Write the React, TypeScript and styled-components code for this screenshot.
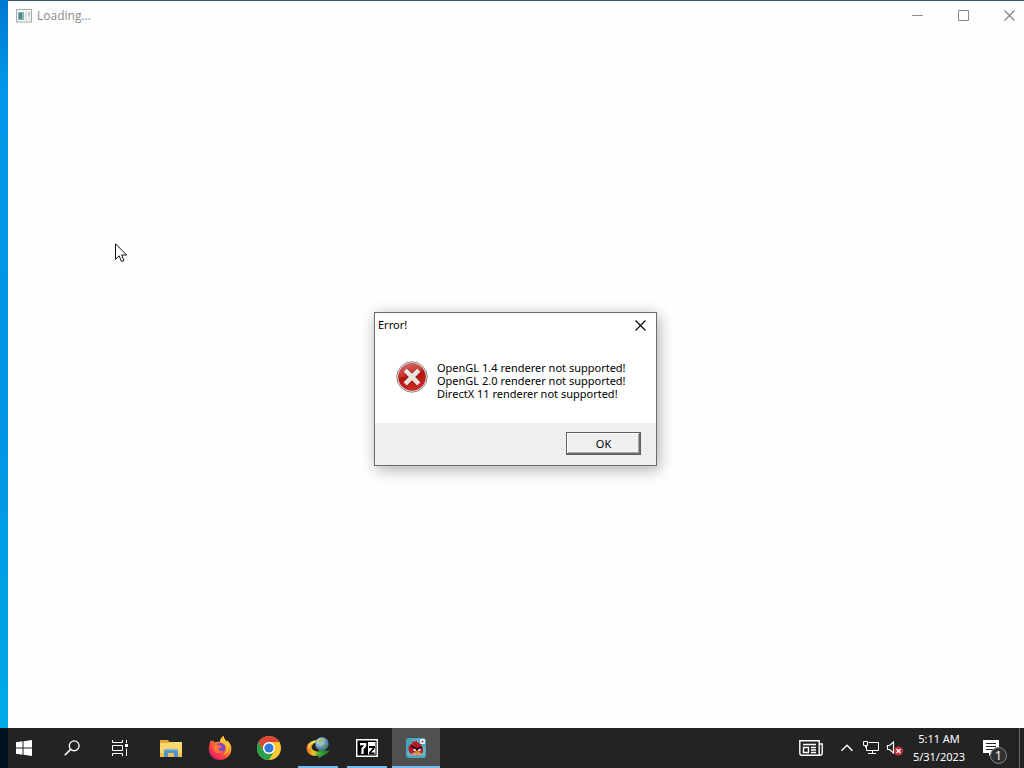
import React from 'react';
import styled, { createGlobalStyle } from 'styled-components';

const GlobalStyle = createGlobalStyle`
  *, *::before, *::after { box-sizing: border-box; }
  body { margin: 0; font-family: "Noto Sans", "Open Sans", sans-serif; }
  button { font: inherit; color: inherit; margin: 0; padding: 0; border: 0; background: none; }
  svg { display: block; flex: none; }
`;

const Screen = styled.div`
  position: relative;
  display: flex;
  flex-direction: column;
  min-height: 100vh;
  overflow: hidden;
`;

const Desktop = styled.div`
  flex: 1;
  display: flex;
  padding-left: 8px;
  background: linear-gradient(#0078d0, #0098ea 12%, #0096e4 60%, #00aae6);
`;

const AppWindow = styled.main`
  flex: 1;
  border-top: 1px solid #3f5870;
  background: #fefefe;
`;

const TitleBar = styled.header`
  display: flex;
  align-items: center;
  height: 29px;
  padding-left: 8px;
  gap: 5px;
  color: #8c8c8c;
`;

const WindowTitle = styled.h1`
  flex: 1;
  margin: 0;
  font-family: "Open Sans", "Noto Sans", sans-serif;
  font-size: 12px;
  line-height: 16px;
  font-weight: 400;
`;

const CaptionButtons = styled.div`
  display: flex;
  margin-right: -8px;
`;

const CaptionButton = styled.button`
  display: grid;
  place-items: center;
  width: 46px;
  height: 29px;
`;

const ModalLayer = styled.div`
  position: absolute;
  inset: 10px 0 0 7px;
  display: grid;
  place-items: center;
`;

const Dialog = styled.section`
  width: 283px;
  border: 1px solid #6b6b6b;
  background: #fff;
  color: #000;
  font-size: 11px;
  line-height: 13px;
  box-shadow: 0 0 14px rgba(0, 0, 0, 0.12), 3px 5px 14px rgba(0, 0, 0, 0.22);
`;

const DialogHeader = styled.header`
  display: flex;
  align-items: center;
  justify-content: space-between;
  height: 24px;
  padding: 0 4px 0 3px;
`;

const DialogTitle = styled.h2`
  margin: 0;
  font-size: 11px;
  line-height: 16px;
  font-weight: 400;
`;

const DialogClose = styled.button`
  display: grid;
  place-items: center;
  width: 23px;
  height: 23px;
`;

const DialogBody = styled.div`
  display: flex;
  gap: 9px;
  height: 86px;
  padding: 24px 21px 0;
`;

const Message = styled.p`
  margin: 0;
  white-space: pre-line;
`;

const DialogFooter = styled.footer`
  display: flex;
  justify-content: flex-end;
  height: 42px;
  padding: 9px 15px 0 0;
  background: #efefef;
`;

const OkButton = styled.button`
  width: 75px;
  height: 23px;
  border: 1px solid #606060;
  background: #f0f0f0;
  line-height: 20px;
  box-shadow: inset -1px -1px #696969, inset 1px 1px #fff, inset -2px -2px #a8a8a8;
`;

const Taskbar = styled.nav`
  display: flex;
  height: 40px;
  background: linear-gradient(90deg, #00131f 8px, #232323 8px);
  color: #fff;
`;

const AppButtons = styled.div`
  display: flex;
  gap: 1px;
  margin-left: 3px;
`;

const TaskButton = styled.button<{ $state?: 'open' | 'active' }>`
  display: grid;
  place-items: center;
  width: 48px;
  height: 40px;
  background: ${({ $state }) => ($state === 'active' ? '#505050' : 'transparent')};
  background-image: ${({ $state }) => ($state ? 'linear-gradient(#76b9ed, #76b9ed)' : 'none')};
  background-repeat: no-repeat;
  background-position: center bottom;
  background-size: ${({ $state }) => ($state === 'active' ? '48px 2px' : '40px 2px')};
`;

const Tray = styled.div`
  display: flex;
  margin-left: auto;
`;

const TrayButton = styled.button<{ $wide?: boolean }>`
  display: grid;
  place-items: center;
  width: ${({ $wide }) => ($wide ? '48px' : '24px')};
  height: 40px;
`;

const Clock = styled.button`
  display: flex;
  flex-direction: column;
  align-items: center;
  justify-content: center;
  width: 64px;
  padding-bottom: 1px;
  font-size: 11px;
  line-height: 18px;
  white-space: nowrap;
`;

const ShowDesktop = styled.button`
  width: 5px;
  border-left: 1px solid #686868;
`;

const Pointer = styled.svg`
  position: absolute;
  left: 115px;
  top: 243px;
`;

const Cross = ({ size, color }: { size: number; color: string }) => (
  <svg width={size} height={size} viewBox="0 0 11 11" stroke={color} fill="none">
    <path d="M.5.5l10 10M10.500.5l-10 10" strokeWidth="1.100" />
  </svg>
);

const WindowIcon = () => (
  <svg width="16" height="14" viewBox="0 0 16 14">
    <rect x=".5" y=".5" width="15" height="12.500" fill="#f3f5f5" stroke="#a5adaf" />
    <rect x="2" y="3" width="6" height="8" fill="#8fb5ae" />
    <rect x="3" y="4" width="3" height="6" fill="#4f8782" />
    <rect x="9" y="3" width="2" height="8" fill="#dfe2e2" />
    <path d="M12 3h2v4h-2z" fill="#c3caca" />
    <path d="M13 7h1v4h-1z" fill="#d3d7d7" />
  </svg>
);

const ErrorIcon = () => (
  <svg width="32" height="32" viewBox="0 0 33 33">
    <defs>
      <linearGradient id="err" x1="0" y1="0" x2=".3" y2="1">
        <stop offset="0" stopColor="#dc7871" />
        <stop offset=".45" stopColor="#c83532" />
        <stop offset=".55" stopColor="#b3110f" />
        <stop offset="1" stopColor="#cc2925" />
      </linearGradient>
    </defs>
    <circle cx="16.500" cy="16.500" r="15.700" fill="#ede7e5" stroke="#8c8583" />
    <circle cx="16.500" cy="16.500" r="14" fill="url(#err)" stroke="#a42a27" strokeWidth=".6" />
    <path d="M9.500 9.500l14 14M23.500 9.500l-14 14" stroke="#8d1a17" strokeWidth="6" />
    <path d="M9.500 9.500l14 14M23.500 9.500l-14 14" stroke="#ece4de" strokeWidth="4.800" />
  </svg>
);

const StartIcon = () => (
  <svg width="16" height="16" viewBox="0 0 16 16" fill="#fff">
    <path d="M0 2.200L6.500 1.300v6.200H0zM7.500 1.200L16 0v7.500H7.500zM0 8.500h6.500v6.200L0 13.800zM7.500 8.500H16V16l-8.500-1.200z" />
  </svg>
);

const SearchIcon = () => (
  <svg width="16" height="16" viewBox="0 0 17 17" fill="none" stroke="#fff" strokeWidth="1.400">
    <circle cx="10.800" cy="6.200" r="5.200" />
    <path d="M7 10L.8 16.200" strokeWidth="1.700" />
  </svg>
);

const TaskViewIcon = () => (
  <svg width="16" height="16" viewBox="0 0 16 16" fill="none" stroke="#fff">
    <path d="M.5 0v2.500h10V0M.5 16v-2.500h10V16M.5 5.500h10v5H.5zM14.500 0v3M14.500 8.500v7.500" />
    <rect x="13" y="4" width="3" height="3" fill="#fff" stroke="none" />
  </svg>
);

const FolderIcon = () => (
  <svg width="22" height="19" viewBox="0 0 22 19">
    <path d="M0 1.500Q0 1 .6 1H8l1.500 2H22v15H0z" fill="#e5a93a" />
    <path d="M0 4h9l1-1h12v15H0z" fill="#fbd86e" />
    <path d="M0 14h22v4H0z" fill="#eebf52" />
    <path d="M4 18v-5.500Q4 10 6 10h10q2 0 2 2.500V18h-4v-4H8v4z" fill="#4d94cf" />
    <path d="M4 11.500Q4.500 10 6 10h10q1.500 0 2 1.500z" fill="#75b7e3" />
  </svg>
);

const FirefoxIcon = () => (
  <svg width="24" height="24" viewBox="0 0 24 24">
    <defs>
      <linearGradient id="ff" x1=".85" y1=".1" x2=".2" y2=".9">
        <stop offset="0" stopColor="#ffe34a" />
        <stop offset=".35" stopColor="#ff9a28" />
        <stop offset=".65" stopColor="#ff4b3e" />
        <stop offset="1" stopColor="#df1e68" />
      </linearGradient>
    </defs>
    <path d="M1.500 9C1.600 6 2.700 4.500 3.500 4l.5 2 1.700-1.500.8 2C8 6 10 5.600 12 6c0-3 2-5 3.500-6 .2 2.600 2 3.500 3 5.500l.8-1c2.800 2.500 4.200 5.500 4.100 8.500C23.300 19.500 18 24 12 24 5.500 24 .8 19.300.8 13c0-1.400.2-2.800.7-4z" fill="url(#ff)" />
    <circle cx="12.200" cy="12" r="5.300" fill="#8145c9" />
    <path d="M5 9.500c2-1.800 4.500-1.400 6 0 1.300.1 3 .4 3 1.200 0 1-3.200 1-3.500 2.500.5 2.200 3.400 2 5 1.200-1.500 4-8.500 4-10-.9z" fill="#ff7034" />
    <path d="M12 6c3.500.2 6.500 3 6.500 7 0 2.500-1 4.300-3 5.700 5-.6 6.400-7.700 3-13.200C17.500 4 15.700 2.600 15.500 0 14 1 12 3 12 6z" fill="#ffc631" />
  </svg>
);

const ChromeIcon = () => (
  <svg width="24" height="24" viewBox="0 0 24 24">
    <circle cx="12" cy="12" r="12" fill="#fdc831" />
    <path d="M1.600 6A12 12 0 0 1 22.400 6H12a6 6 0 0 0-5.200 9z" fill="#dc4639" />
    <path d="M1.600 6A12 12 0 0 0 12 24l5.200-9A6 6 0 0 1 6.800 15z" fill="#2aa04e" />
    <circle cx="12" cy="12" r="6" fill="#fff" />
    <circle cx="12" cy="12" r="4.600" fill="#3079de" />
  </svg>
);

const IdmIcon = () => (
  <svg width="24" height="22" viewBox="0 0 24 22">
    <defs>
      <radialGradient id="globe" cx=".35" cy=".3" r=".75">
        <stop offset="0" stopColor="#e2f0f4" />
        <stop offset=".5" stopColor="#7fa5bd" />
        <stop offset="1" stopColor="#2c5f96" />
      </radialGradient>
      <linearGradient id="arrow" x1="0" y1="0" x2="1" y2="0">
        <stop offset="0" stopColor="#e4641f" />
        <stop offset=".3" stopColor="#e8c42b" />
        <stop offset=".55" stopColor="#3fa63a" />
        <stop offset="1" stopColor="#127a1c" />
      </linearGradient>
    </defs>
    <path d="M11 3C4 3.500 0 7.500.5 12c.5 5 6 8 12 6.500L13 21l11-6.500-11-2.500.3 2.200C9 15 5.500 13 5.700 9.800 6 7.500 8 5.500 11 5z" fill="url(#arrow)" />
    <path d="M9 4.500C5 5.500 2.500 8 3 11.500" stroke="#f5df69" strokeWidth="1.500" fill="none" />
    <circle cx="16" cy="7" r="6.700" fill="url(#globe)" />
    <path d="M12 3l3-1.500 3 1.500-2 3-3 1.500z" fill="#8fbd62" opacity=".8" />
    <path d="M17 8l4-1-1 4-3 1.500z" fill="#5c9d50" opacity=".8" />
  </svg>
);

const SevenZipIcon = () => (
  <svg width="22" height="18" viewBox="0 0 22 18">
    <path d="M0 0h22v18H0z" fill="#fff" />
    <path d="M1.500 1.500h19v15h-19z" fill="#000" />
    <path d="M12 3h7.500v12.500H12z" fill="#fff" />
    <path d="M4 5.200h5.200v1.500L6.500 10v5" fill="none" stroke="#fff" strokeWidth="2.200" />
    <path d="M13 8h5v1l-4 4.500v1h4.500" fill="none" stroke="#000" strokeWidth="1.800" />
  </svg>
);

const BirdIcon = () => (
  <svg width="20" height="20" viewBox="0 0 20 20">
    <rect width="20" height="20" rx="3" fill="#43a7c3" />
    <path d="M1 15L6 2l8-1-3 4 8 4v9H3z" fill="#6fb4c4" />
    <path d="M2.500 12C2 8 4.500 5.500 7 5L5 2.500 9 4l1-2 1.500 2.500C15 5.500 17.500 9 17 13c-.5 4-5 5.500-8.500 4.500C5 16.500 3 15 2.500 12z" fill="#b81827" />
    <path d="M5 15.500c3-1.500 7-1.500 11 0-2 2.500-8 3.500-11 0z" fill="#caa28c" />
    <path d="M5 7l6 3 5-1.500V10l-5 2.500L5 9z" fill="#1e0b12" />
    <path d="M7.500 10.500l2.500 1v1.500H7.500zM12 11.500l2.500-1V13H12z" fill="#e9e1df" />
    <path d="M9.500 12.500l5.500 1.500-4.500 2.500-2-1.500z" fill="#c99228" />
    <rect x="14" y="1" width="5" height="5" rx="1" fill="#f4eeee" />
    <circle cx="16.500" cy="3.500" r="1" fill="#bf3543" />
  </svg>
);

const NewsIcon = () => (
  <svg width="24" height="16" viewBox="0 0 24 16" fill="none" stroke="#fff" strokeWidth="1.400">
    <path d="M.8.8h19.400v14.400H3Q.8 15.200.8 13zM20.200 4h3v9q0 2.200-2.200 2.200h-1.500" />
    <path d="M4 4.500h13M12 7.500h5M12 10h5M12 12.500h5" />
    <path d="M4.500 7.500h5v5h-5z" />
  </svg>
);

const ChevronIcon = () => (
  <svg width="12" height="8" viewBox="0 0 12 8" fill="none" stroke="#fff" strokeWidth="1.400">
    <path d="M.5 6.700L6 1.200l5.500 5.500" />
  </svg>
);

const NetworkIcon = () => (
  <svg width="16" height="14" viewBox="0 0 16 14" fill="none" stroke="#fff">
    <path d="M5.500 1.500h10v8h-12V5M9.500 9.500v3M5 12.500h8" />
    <path d="M.5.5h4v4h-4zM2.500 5v1.500h1" />
  </svg>
);

const VolumeIcon = () => (
  <svg width="18" height="16" viewBox="0 0 18 16" fill="none">
    <path d="M1.500 5.500h2L7.500 2v11L3.500 9.500h-2z" stroke="#fff" strokeWidth="1.200" />
    <circle cx="12.500" cy="11" r="4.500" fill="#c92e3e" />
    <path d="M10.500 9l4 4M14.500 9l-4 4" stroke="#fff" strokeWidth="1.200" />
  </svg>
);

const NoticeWrap = styled.span`
  position: relative;
  display: block;
  width: 24px;
  height: 24px;
  margin-top: 8px;
`;

const NoticeCount = styled.span`
  position: absolute;
  left: 7px;
  top: 7px;
  display: grid;
  place-items: center;
  width: 17px;
  height: 17px;
  border: 1px solid #898989;
  border-radius: 50%;
  background: #303030;
  font-size: 12px;
  line-height: 15px;
`;

const NoticeIcon = () => (
  <svg width="24" height="24" viewBox="0 0 24 24">
    <path d="M0 0h16v13H9l-3 3v-3H0z" fill="#fff" />
    <path d="M3 3.500h10M3 6.500h10M3 9.500h7" stroke="#232323" />
  </svg>
);

export default function App() {
  return (
    <Screen>
      <GlobalStyle />
      <Desktop>
        <AppWindow>
          <TitleBar>
            <WindowIcon />
            <WindowTitle>Loading...</WindowTitle>
            <CaptionButtons>
              <CaptionButton aria-label="Minimize">
                <svg width="11" height="11"><path d="M0 5.500h11" stroke="#909090" /></svg>
              </CaptionButton>
              <CaptionButton aria-label="Maximize">
                <svg width="11" height="11"><path d="M.5.5h10v10H.5z" fill="none" stroke="#888" /></svg>
              </CaptionButton>
              <CaptionButton aria-label="Close"><Cross size={11} color="#808080" /></CaptionButton>
            </CaptionButtons>
          </TitleBar>
        </AppWindow>
      </Desktop>

      <Taskbar aria-label="Taskbar">
        <TaskButton aria-label="Start"><StartIcon /></TaskButton>
        <TaskButton aria-label="Search"><SearchIcon /></TaskButton>
        <TaskButton aria-label="Task View"><TaskViewIcon /></TaskButton>
        <AppButtons>
          <TaskButton aria-label="File Explorer"><FolderIcon /></TaskButton>
          <TaskButton aria-label="Firefox"><FirefoxIcon /></TaskButton>
          <TaskButton aria-label="Chrome"><ChromeIcon /></TaskButton>
          <TaskButton aria-label="Download Manager" $state="open"><IdmIcon /></TaskButton>
          <TaskButton aria-label="7-Zip" $state="open"><SevenZipIcon /></TaskButton>
          <TaskButton aria-label="Game" $state="active"><BirdIcon /></TaskButton>
        </AppButtons>
        <Tray>
          <TrayButton $wide aria-label="News"><NewsIcon /></TrayButton>
          <TrayButton aria-label="Show hidden icons"><ChevronIcon /></TrayButton>
          <TrayButton aria-label="Network"><NetworkIcon /></TrayButton>
          <TrayButton aria-label="Volume muted"><VolumeIcon /></TrayButton>
          <Clock><span>5:11 AM</span><span>5/31/2023</span></Clock>
          <TrayButton $wide aria-label="Notifications">
            <NoticeWrap><NoticeIcon /><NoticeCount>1</NoticeCount></NoticeWrap>
          </TrayButton>
          <ShowDesktop aria-label="Show desktop" />
        </Tray>
      </Taskbar>

      <ModalLayer>
        <Dialog role="alertdialog" aria-labelledby="dialog-title" aria-describedby="dialog-message">
          <DialogHeader>
            <DialogTitle id="dialog-title">Error!</DialogTitle>
            <DialogClose aria-label="Close dialog"><Cross size={11} color="#000" /></DialogClose>
          </DialogHeader>
          <DialogBody>
            <ErrorIcon />
            <Message id="dialog-message">
              {'OpenGL 1.4 renderer not supported!\nOpenGL 2.0 renderer not supported!\nDirectX 11 renderer not supported!'}
            </Message>
          </DialogBody>
          <DialogFooter><OkButton>OK</OkButton></DialogFooter>
        </Dialog>
      </ModalLayer>

      <Pointer width="13" height="20" viewBox="0 0 13 20" aria-hidden="true">
        <path d="M.5.8v15.500l3.600-3.500 2.400 5.700 2.500-1-2.400-5.500h5z" fill="#fff" stroke="#111" />
      </Pointer>
    </Screen>
  );
}
